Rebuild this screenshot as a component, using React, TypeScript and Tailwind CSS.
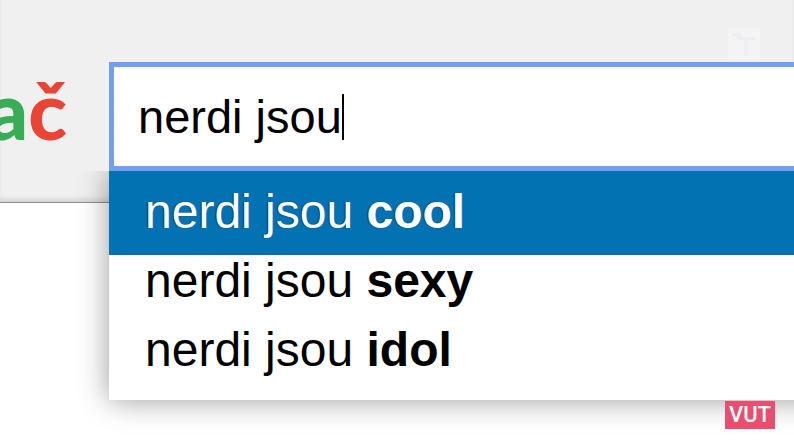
import { useState } from 'react';

const suggestions = ['cool', 'sexy', 'idol'];

export default function App() {
  const [query, setQuery] = useState('nerdi jsou');
  const [active, setActive] = useState(0);

  return (
    <div className="relative min-h-screen overflow-hidden bg-white font-['Liberation_Sans',Arial,sans-serif] text-5xl text-black">
      <header className="flex border-b border-[#8f8f8f] bg-[#f0f0f0] pt-[62px] pb-[31px] shadow-[inset_0_-5px_5px_-2px_rgba(0,0,0,0.12)]">
        {/* Logo, cut off by the left edge */}
        <div className="flex w-[109px] shrink-0 justify-end pr-[42px] font-['Lato',sans-serif] text-[80px] leading-[94px] font-black">
          <span className="text-[#38ad56]">a</span>
          <span className="text-[#ea4435]">č</span>
        </div>

        {/* Search box */}
        <div className="relative min-w-0 flex-1">
          <input
            type="text"
            aria-label="Vyhledávač"
            value={query}
            onChange={(e) => setQuery(e.target.value)}
            className="block h-[109px] w-full border-[5px] border-r-0 border-[#72a0ee] bg-white pl-6 text-[47px] caret-transparent outline-none"
          />
          <div aria-hidden="true" className="pointer-events-none absolute inset-0 flex items-center pl-[29px] text-[47px]">
            <span className="invisible whitespace-pre">{query}</span>
            <span className="h-[46px] w-0.5 bg-black" />
          </div>

          {/* Suggestions */}
          <div className="absolute top-full right-0 -left-9 z-10 overflow-hidden pb-9 pl-9">
            <ul role="listbox" className="-mr-9 bg-white pb-[7px] shadow-[0_0_28px_rgba(0,0,0,0.4)]">
              {suggestions.map((word, i) => (
                <li key={word} role="option" aria-selected={i === active}>
                  <button
                    type="button"
                    onMouseEnter={() => setActive(i)}
                    onClick={() => setQuery(`nerdi jsou ${word}`)}
                    className={
                      i === active
                        ? 'block w-full bg-[#0272b3] pt-[15px] pb-[18px] pl-9 text-left leading-[51px] whitespace-nowrap text-white text-shadow-[-1px_0_1px_rgba(0,0,0,0.5)]'
                        : 'block w-full pb-[18px] pl-9 text-left leading-[51px] whitespace-nowrap'
                    }
                  >
                    nerdi jsou <b>{word}</b>
                  </button>
                </li>
              ))}
            </ul>
          </div>
        </div>
      </header>

      {/* Channel watermark */}
      <div className="absolute top-7 right-[34px] size-8 bg-[#f4f3f5]">
        <svg viewBox="0 0 32 32" className="size-8" fill="#eeedef" aria-hidden="true">
          <path d="M4 5h8l3 4h12v3h-7v16h-4V12h-5l-3-3H4z" />
        </svg>
      </div>

      <div className="absolute right-[19px] bottom-4 z-20 flex h-7 w-[50px] items-center justify-center bg-[#ea4d6e] font-['Roboto',sans-serif] text-[22px] leading-7 font-medium text-white">
        VUT
      </div>
    </div>
  );
}
